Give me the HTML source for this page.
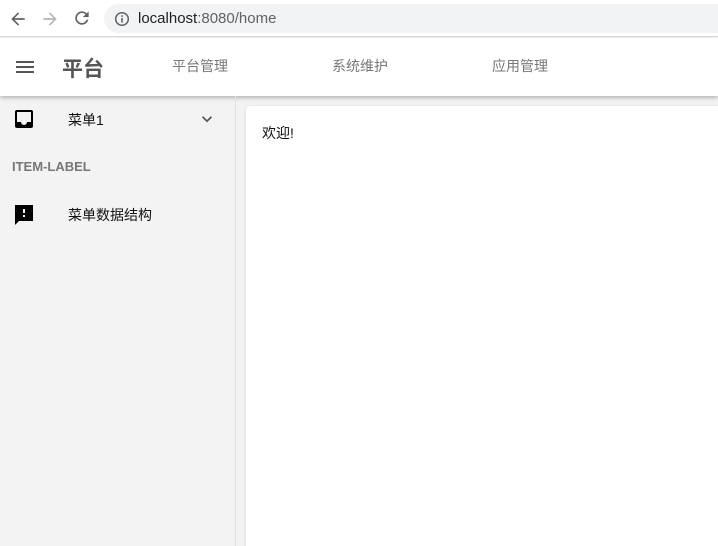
<!DOCTYPE html>
<html><head><meta charset="utf-8"><style>
*{margin:0;padding:0;box-sizing:border-box}
html,body{width:718px;height:546px;overflow:hidden}
body{background:#f3f3f3;font-family:"Liberation Sans","Noto Sans CJK SC",sans-serif;position:relative}
.abs{position:absolute}
</style></head><body>
<div class="abs" style="left:0;top:0;width:718px;height:37px;background:#fff;border-bottom:1px solid #dadce0"></div>
<svg class="abs" style="left:8px;top:9px" width="20" height="20" viewBox="0 0 24 24"><path d="M20 11H7.8l5.6-5.6L12 4l-8 8 8 8 1.4-1.4L7.8 13H20z" fill="#5f6368"/></svg>
<svg class="abs" style="left:40px;top:9px" width="20" height="20" viewBox="0 0 24 24"><path d="M4 11h12.2l-5.6-5.6L12 4l8 8-8 8-1.4-1.4 5.6-5.6H4z" fill="#b5b5b5"/></svg>
<svg class="abs" style="left:72px;top:8px" width="20" height="20" viewBox="0 0 24 24"><path d="M17.6 6.4A8 8 0 1 0 19.7 14h-2.1A6 6 0 1 1 12 6c1.7 0 3.1.7 4.2 1.8L13 11h7V4z" fill="#5f6368"/></svg>
<div class="abs" style="left:104px;top:4px;width:640px;height:29px;border-radius:15px;background:#f1f3f4"></div>
<svg class="abs" style="left:114px;top:11px" width="16" height="16" viewBox="0 0 16 16"><circle cx="8" cy="8" r="6.3" fill="none" stroke="#5f6368" stroke-width="1.5"/><rect x="7.2" y="7" width="1.6" height="4.5" fill="#5f6368"/><rect x="7.2" y="4.3" width="1.6" height="1.6" fill="#5f6368"/></svg>
<div class="abs" style="left:138px;top:10px;font-size:15px;color:#202124">localhost<span style="color:#5f6368">:8080/home</span></div>
<div class="abs" style="left:0;top:38px;width:718px;height:58px;background:#fff;box-shadow:0 2px 4px rgba(0,0,0,.25)"></div>
<svg class="abs" style="left:13px;top:55px" width="24" height="24" viewBox="0 0 24 24"><path d="M3 6h18v2H3zm0 5h18v2H3zm0 5h18v2H3z" fill="#555"/></svg>
<div class="abs" style="left:62px;top:53px;font-size:21px;font-weight:bold;color:#555">平台</div>
<div class="abs" style="left:172px;top:56px;font-size:14px;color:#777">平台管理</div>
<div class="abs" style="left:332px;top:56px;font-size:14px;color:#777">系统维护</div>
<div class="abs" style="left:492px;top:56px;font-size:14px;color:#777">应用管理</div>
<div class="abs" style="left:235px;top:96px;width:1px;height:450px;background:#e0e0e0"></div>
<svg class="abs" style="left:12px;top:107px" width="24" height="24" viewBox="0 0 24 24"><path d="M19 3H5a2 2 0 0 0-2 2v14a2 2 0 0 0 2 2h14a2 2 0 0 0 2-2V5a2 2 0 0 0-2-2zm0 12h-4a3 3 0 0 1-6 0H5V5h14z" fill="#000"/></svg>
<div class="abs" style="left:68px;top:110px;font-size:14px;color:#111">菜单1</div>
<svg class="abs" style="left:197px;top:109px" width="20" height="20" viewBox="0 0 24 24"><path d="M7.4 8.6 12 13.2l4.6-4.6L18 10l-6 6-6-6z" fill="#555"/></svg>
<div class="abs" style="left:12px;top:159px;font-size:13px;font-weight:bold;color:#777">ITEM-LABEL</div>
<svg class="abs" style="left:12px;top:203px" width="24" height="24" viewBox="0 0 24 24"><path d="M21 2H3v20l4-4h14zM13 14h-2v-2h2zm0-4h-2V6h2z" fill="#000"/></svg>
<div class="abs" style="left:68px;top:205px;font-size:14px;color:#111">菜单数据结构</div>
<div class="abs" style="left:246px;top:106px;width:480px;height:450px;background:#fff;border-radius:4px;box-shadow:0 1px 3px rgba(0,0,0,.15)"></div>
<div class="abs" style="left:262px;top:123px;font-size:14px;color:#111">欢迎!</div>
</body></html>
